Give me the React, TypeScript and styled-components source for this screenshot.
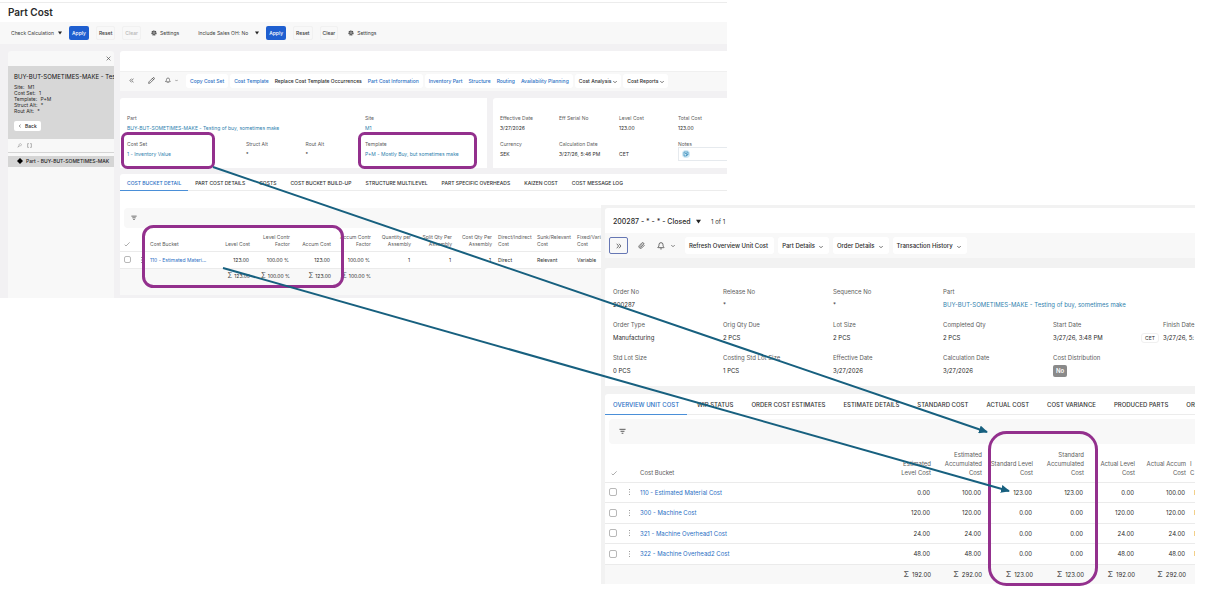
import React from "react";
import styled, { createGlobalStyle, css } from "styled-components";
import { Bell, Paperclip, Pencil } from "lucide-react";

const GlobalStyle = createGlobalStyle`
  * { box-sizing: border-box; }
  body { margin: 0; background: #fff; color: #2b2b2b; font-family: Inter, "Liberation Sans", sans-serif; font-size: 5px; }
  button, select, input { font: inherit; color: inherit; margin: 0; }
  a { text-decoration: none; }
`;

type Size = "small" | "large";

const link = "#2f7fae";
const blue = "#2a6fc4";

/* ---------- canvas ---------- */

const Canvas = styled.main`
  position: relative;
  display: grid;
  grid-template-columns: 601fr 126fr 468fr 13fr;
  overflow: hidden;
`;

const PartCostWindow = styled.section`
  grid-area: 1 / 1 / 2 / 3;
  min-width: 0;
  margin-top: 2px;
  height: 296px;
  overflow: hidden;
  display: flex;
  flex-direction: column;
  border-top: 1px solid #ececec;
`;

const OrderWindow = styled.section`
  grid-area: 1 / 2 / 2 / 4;
  min-width: 0;
  margin: 205px 0 8px;
  padding: 3px 0 0 4px;
  overflow: hidden;
  z-index: 1;
  display: flex;
  flex-direction: column;
  font-size: 6px;
  background: #f2f2f2;
`;

const Annotations = styled.svg`
  position: absolute;
  left: 0;
  top: 0;
  z-index: 2;
  pointer-events: none;
`;

/* ---------- shared parts ---------- */

const Title = styled.h1`
  margin: 0;
  padding-left: 8px;
  height: 19px;
  line-height: 19px;
  font-size: 10px;
  font-weight: 600;
  background: #fff;
`;

const Button = styled.button<{ $kind?: "primary" | "outline" }>`
  height: 14px;
  padding: 0 2px;
  display: flex;
  align-items: center;
  justify-content: center;
  gap: 3px;
  white-space: nowrap;
  border: 1px solid transparent;
  border-radius: 2px;
  background: transparent;
  &:disabled { color: #b5b5b5; }
  ${(p) => p.$kind === "primary" && css`background: #1f5fd0; color: #fff; font-weight: 500;`}
  ${(p) => p.$kind === "outline" && css`border-color: #f1f1f1; font-weight: 500;`}
`;

const SelectBox = styled.label`
  display: flex;
  align-items: center;
  gap: 2px;
`;

const Select = styled.select<{ $width: number; $size?: Size }>`
  appearance: none;
  border: 0;
  padding: 0;
  background: transparent;
  width: ${(p) => p.$width}px;
  font-size: ${(p) => (p.$size === "large" ? 7 : 5)}px;
  font-weight: ${(p) => (p.$size === "large" ? 500 : 400)};
`;

const Card = styled.div`
  background: #fff;
  border-radius: 3px 0 0 0;
  min-width: 0;
  overflow: hidden;
`;

const Group = styled.div`
  display: flex;
  align-items: center;
  gap: 6px;
  flex: none;
  height: 14px;
  padding: 0 4px;
  border-radius: 3px;
  background: #fff;
  font-weight: 500;
  white-space: nowrap;
`;

const MenuButton = styled.button<{ $size?: Size }>`
  display: flex;
  align-items: center;
  gap: ${(p) => (p.$size === "large" ? 4 : 2)}px;
  flex: none;
  height: ${(p) => (p.$size === "large" ? 17 : 14)}px;
  padding: 0 ${(p) => (p.$size === "large" ? 6 : 4)}px 0 4px;
  border: 0;
  border-radius: 3px;
  background: #fff;
  font-weight: 500;
  white-space: nowrap;
  svg { margin-top: 3px; }
`;

const TextButton = styled.button`
  border: 0;
  padding: 0;
  background: transparent;
  font-weight: 500;
`;

const IconButton = styled.button<{ $framed?: boolean; $width: number }>`
  flex: none;
  display: flex;
  align-items: center;
  justify-content: center;
  width: ${(p) => p.$width}px;
  height: 17px;
  padding: 0;
  border: ${(p) => (p.$framed ? "1px solid #6677b4" : "0")};
  border-radius: 2px;
  background: transparent;
  color: #444;
`;

const IconCluster = styled.div<{ $after: number }>`
  display: flex;
  align-items: center;
  gap: 4px;
  margin-right: ${(p) => p.$after}px;
`;

const ToolLink = styled.a`
  color: ${blue};
`;

const Tabs = styled.div<{ $size?: Size }>`
  display: flex;
  gap: ${(p) => (p.$size === "large" ? 2 : 0)}px;
  height: ${(p) => (p.$size === "large" ? 21 : 17)}px;
  border-bottom: 1px solid #ececec;
`;

const Tab = styled.button<{ $size?: Size; $active?: boolean }>`
  flex: none;
  height: ${(p) => (p.$size === "large" ? 21 : 17)}px;
  padding: ${(p) => (p.$size === "large" ? "0 8px" : "2px 7px 0")};
  border: 0;
  border-bottom: 1px solid ${(p) => (p.$active ? "#4a8fd8" : "transparent")};
  background: transparent;
  font-weight: 500;
  white-space: nowrap;
  color: ${(p) => (p.$active ? blue : "#333")};
`;

const FilterBar = styled.div<{ $size?: Size }>`
  display: flex;
  align-items: center;
  margin-left: 4px;
  padding-left: ${(p) => (p.$size === "large" ? 10 : 7)}px;
  height: ${(p) => (p.$size === "large" ? 25 : 20)}px;
  border-radius: 4px 0 0 4px;
  background: #f8f8f8;
  color: #444;
`;

const FieldBox = styled.div<{ $size?: Size; $span?: number }>`
  grid-column: span ${(p) => p.$span ?? 1};
  line-height: ${(p) => (p.$size === "large" ? 13 : 10)}px;
  white-space: nowrap;
  dt { color: #5c5c5c; }
  dd { margin: 0; display: flex; align-items: center; height: ${(p) => (p.$size === "large" ? 13 : 10)}px; }
  a { color: ${link}; }
`;

const Zone = styled.span`
  margin-left: auto;
  margin-right: 4px;
  padding: 0 3px;
  font-size: 5px;
  line-height: 8px;
  border: 1px solid #f0f0f0;
  border-radius: 3px;
`;

const Badge = styled.span`
  padding: 0 3px;
  font-weight: 600;
  line-height: 12px;
  color: #fff;
  background: #8a8a8a;
  border-radius: 2px;
`;

const Table = styled.table<{ $size?: Size }>`
  table-layout: fixed;
  width: 100%;
  border-collapse: collapse;
  th, td { padding: 0 2px 0 0; text-align: right; font-weight: 400; white-space: nowrap; overflow: hidden; }
  th { color: #5c5c5c; vertical-align: bottom; padding-right: 1px; line-height: ${(p) => (p.$size === "large" ? 9 : 7)}px; }
  thead tr { height: ${(p) => (p.$size === "large" ? 38 : 23)}px; }
  thead th { padding-bottom: ${(p) => (p.$size === "large" ? 5 : 3)}px; }
  tbody tr { height: ${(p) => (p.$size === "large" ? 20 : 17)}px; border-top: 1px solid #ebebeb; }
  tbody tr:nth-child(even) { height: ${(p) => (p.$size === "large" ? 21 : 17)}px; }
  tfoot tr { height: ${(p) => (p.$size === "large" ? 20 : 16)}px; border-top: 1px solid #ebebeb; background: #f8f8f8; }
  tfoot td { padding-right: 1px; }
  .text { text-align: left; padding-left: ${(p) => (p.$size === "large" ? 4 : 2)}px; }
  .last { padding-left: 5px; text-align: left; }
  .edge { padding: 0 0 0 3px; text-align: left; }
  thead .edge { padding-bottom: 5px; }
  .center { text-align: center; padding-left: 0; padding-right: 0; }
  .center svg { display: block; margin: 0 auto; }
  a { color: ${blue}; }
`;

const Sigma = styled.span<{ $size?: Size }>`
  margin-right: ${(p) => (p.$size === "large" ? 3 : 2)}px;
  font-size: ${(p) => (p.$size === "large" ? 8 : 7)}px;
  line-height: 8px;
  color: #555;
`;

const Check = styled.input<{ $size?: Size }>`
  appearance: none;
  display: block;
  margin: 0 0 0 4px;
  width: ${(p) => (p.$size === "large" ? 8 : 7)}px;
  height: ${(p) => (p.$size === "large" ? 8 : 7)}px;
  border: 1px solid #b8b8b8;
  border-radius: 2px;
  background: #fff;
`;

const Flag = styled.span`
  display: block;
  margin-left: auto;
  width: 1px;
  height: 5px;
  background: #f3d08a;
`;

/* ---------- icons ---------- */

const Icon = ({ d, size = 6, width = 1.6 }: { d: string; size?: number; width?: number }) => (
  <svg width={size} height={size} viewBox="0 0 16 16" fill="none" stroke="currentColor" strokeWidth={width} aria-hidden="true">
    <path d={d} />
  </svg>
);
const Caret = ({ size = 4 }: { size?: number }) => (
  <svg width={size} height={size} viewBox="0 0 8 8" aria-hidden="true"><path d="M0 1h8L4 7z" fill="#222" /></svg>
);
const Chevron = ({ size = 4 }: { size?: number }) => <Icon size={size} d="M1 4l7 7 7-7" width={2.6} />;
const Gear = () => (
  <svg width="6" height="6" viewBox="0 0 16 16" fill="none" stroke="#444" aria-hidden="true">
    <circle cx="8" cy="8" r="5.5" strokeWidth="3" strokeDasharray="3 1.3" />
    <circle cx="8" cy="8" r="4" strokeWidth="2" />
    <circle cx="8" cy="8" r="1.5" fill="#444" />
  </svg>
);
const Funnel = ({ size = 6 }: { size?: number }) => <Icon size={size} d="M1 3h14M3.500 7.500h9M6 12h4" width={2} />;
const Tick = () => (
  <svg width="6" height="8" viewBox="0 0 18 24" fill="none" stroke="#777" strokeWidth="1.800" aria-hidden="true">
    <path d="M2 14l4 4L17 7" />
  </svg>
);
const Dots = () => (
  <svg width="3" height="6" viewBox="0 0 3 6" fill="#999" aria-hidden="true">
    <path d="M1 0h1v1H1zM1 2.500h1v1H1zM1 5h1v1H1z" />
  </svg>
);

/* ---------- part cost window ---------- */

const TopBar = styled.div`
  display: flex;
  align-items: center;
  height: 22px;
  flex: none;
  padding-left: 11px;
  gap: 16px;
  background: #f8f8f8;
  color: #3a3a3a;
`;

const CommandSet = styled.div`
  display: flex;
  align-items: center;
  gap: 7px;
`;

const Split = styled.div`
  flex: 1;
  display: flex;
  gap: 6px;
  min-height: 0;
  padding: 7px 0 0 8px;
  background: #f2f1f3;
`;

const Sidebar = styled.aside`
  flex: none;
  width: 106px;
  display: flex;
  flex-direction: column;
  overflow: hidden;
  border-radius: 3px 3px 0 0;
  background: #f8f8f8;
`;

const SideClose = styled.div`
  height: 15px;
  display: flex;
  align-items: center;
  justify-content: flex-end;
  padding-right: 3px;
`;

const SideInfo = styled.div`
  height: 73px;
  padding: 7px 0 0 6px;
  background: #d7d7d7;
  white-space: nowrap;
  line-height: 6px;
  h2 { margin: 0 0 3px; font-size: 6px; line-height: 8px; font-weight: 400; color: #111; }
  p { margin: 0; }
  p span { margin-left: 2px; }
  button { margin-top: 7px; height: 10px; padding: 0 3px; background: #fff; font-weight: 500; }
`;

const SideIcons = styled.div`
  height: 14px;
  display: flex;
  align-items: center;
  gap: 5px;
  padding-left: 9px;
  color: #888;
  border-bottom: 1px solid #d5d5d5;
`;

const SideRow = styled.a`
  margin-top: 3px;
  height: 11px;
  display: flex;
  align-items: center;
  gap: 3px;
  padding: 0 0 1px 9px;
  font-weight: 500;
  white-space: nowrap;
  color: #222;
  background: #d5d5d5;
`;

const Main = styled.div`
  flex: 1;
  min-width: 0;
  display: flex;
  flex-direction: column;
`;

const HeaderSpace = styled.div`
  height: 20px;
`;

const ActionBar = styled.div`
  display: flex;
  align-items: center;
  gap: 2px;
  height: 20px;
  padding: 0 0 2px 6px;
  background: #f8f8f8;
  border-top: 1px solid #f0f0f0;
`;

const CardRow = styled.div`
  display: grid;
  grid-template-columns: 367fr 234fr;
  gap: 6px;
  margin: 7px 0 6px;
`;

const PartFields = styled.dl`
  display: grid;
  grid-template-columns: 2fr 1fr 1fr 2fr;
  row-gap: 6px;
  margin: 0;
  padding: 15px 3px 9px 7px;
`;

const CostFields = styled.dl`
  display: grid;
  grid-template-columns: 59px 60px 59px 60px;
  row-gap: 6px;
  margin: 0;
  padding: 15px 0 9px 7px;
`;

const NotesButton = styled.button`
  width: 60px;
  height: 14px;
  flex: none;
  display: flex;
  align-items: center;
  padding: 0 0 0 3px;
  border: 1px solid #e6eaee;
  background: #fff;
`;

const TabGap = styled.div`
  height: 17px;
`;

const TableRest = styled.div`
  height: 11px;
  background: #f8f8f8;
`;

const Field = ({ label, children, size, span }: { label: string; children?: React.ReactNode; size?: Size; span?: number }) => (
  <FieldBox $size={size} $span={span}>
    <dt>{label}</dt>
    <dd>{children}</dd>
  </FieldBox>
);

const partTabs = ["COST BUCKET DETAIL", "PART COST DETAILS", "COSTS", "COST BUCKET BUILD-UP", "STRUCTURE MULTILEVEL", "PART SPECIFIC OVERHEADS", "KAIZEN COST", "COST MESSAGE LOG"];
const partCols = [14, 14, 61, 42, 40, 41, 40, 40, 41, 40, 42, 40, 40];
const partSums = ["123.00", "100.00 %", "123.00", "100.00 %"];

const PartCost = () => (
  <PartCostWindow>
    <Title>Part Cost</Title>
    <TopBar>
      <CommandSet>
        <SelectBox>
          <Select $width={45} aria-label="Calculation"><option>Check Calculation</option></Select>
          <Caret />
        </SelectBox>
        <Button $kind="primary">Apply</Button>
        <Button $kind="outline">Reset</Button>
        <Button $kind="outline" disabled>Clear</Button>
        <Button><Gear />Settings</Button>
      </CommandSet>
      <CommandSet>
        <SelectBox>
          <Select $width={55} aria-label="Sales overhead"><option>Include Sales OH: No</option></Select>
          <Caret />
        </SelectBox>
        <Button $kind="primary">Apply</Button>
        <Button $kind="outline">Reset</Button>
        <Button $kind="outline">Clear</Button>
        <Button><Gear />Settings</Button>
      </CommandSet>
    </TopBar>
    <Split>
      <Sidebar>
        <SideClose><IconButton $width={6} aria-label="Close"><Icon size={5} d="M2 2l12 12M14 2L2 14" width={2} /></IconButton></SideClose>
        <SideInfo>
          <h2>BUY-BUT-SOMETIMES-MAKE - Test</h2>
          <p>Site: <span>M1</span></p>
          <p>Cost Set: <span>1</span></p>
          <p>Template: <span>P+M</span></p>
          <p>Struct Alt: <span>*</span></p>
          <p>Rout Alt: <span>*</span></p>
          <Button><Icon size={4} d="M10 2L5 8l5 6" width={2} />Back</Button>
        </SideInfo>
        <SideIcons>
          <Icon size={5} d="M2 14l3-3M6 5l5 5 4-5-4-3zM5 8l-1 4 4-1" />
          <Icon size={5} d="M6 2H2v12h4M10 2h4v12h-4" width={2} />
        </SideIcons>
        <SideRow href="#part">
          <svg width="6" height="6" viewBox="0 0 6 6" aria-hidden="true"><path d="M3 0l3 3-3 3-3-3z" /></svg>
          Part - BUY-BUT-SOMETIMES-MAK
        </SideRow>
      </Sidebar>
      <Main>
        <Card>
          <HeaderSpace />
          <ActionBar>
            <IconCluster $after={6}>
              <IconButton $width={11} aria-label="Collapse"><Icon size={5} d="M8 2L3 8l5 6M14 2L9 8l5 6" width={2} /></IconButton>
              <IconButton $width={20} aria-label="Edit"><Pencil size={7} strokeWidth={2.4} /></IconButton>
              <IconButton $width={6} aria-label="Notifications"><Bell size={7} strokeWidth={2.4} /></IconButton>
              <IconButton $width={3} aria-label="More"><Chevron size={3} /></IconButton>
            </IconCluster>
            <Group><ToolLink href="#copy">Copy Cost Set</ToolLink></Group>
            <Group>
              <ToolLink href="#template">Cost Template</ToolLink>
              <TextButton>Replace Cost Template Occurrences</TextButton>
              <ToolLink href="#info">Part Cost Information</ToolLink>
            </Group>
            <Group>
              <ToolLink href="#inventory">Inventory Part</ToolLink>
              <ToolLink href="#structure">Structure</ToolLink>
              <ToolLink href="#routing">Routing</ToolLink>
              <ToolLink href="#planning">Availability Planning</ToolLink>
            </Group>
            <MenuButton>Cost Analysis<Chevron /></MenuButton>
            <MenuButton>Cost Reports<Chevron /></MenuButton>
          </ActionBar>
        </Card>
        <CardRow>
          <Card>
            <PartFields>
              <Field label="Part" span={3}><a href="#part">BUY-BUT-SOMETIMES-MAKE - Testing of buy, sometimes make</a></Field>
              <Field label="Site"><a href="#site">M1</a></Field>
              <Field label="Cost Set"><a href="#set">1 - Inventory Value</a></Field>
              <Field label="Struct Alt">*</Field>
              <Field label="Rout Alt">*</Field>
              <Field label="Template"><a href="#tpl">P+M - Mostly Buy, but sometimes make</a></Field>
            </PartFields>
          </Card>
          <Card>
            <CostFields>
              <Field label="Effective Date">3/27/2026</Field>
              <Field label="Eff Serial No" />
              <Field label="Level Cost">123.00</Field>
              <Field label="Total Cost">123.00</Field>
              <Field label="Currency">SEK</Field>
              <Field label="Calculation Date">3/27/26, 5:46 PM</Field>
              <Field label={"\u00a0"}>CET</Field>
              <Field label="Notes">
                <NotesButton aria-label="Notes">
                  <svg width="8" height="8" viewBox="0 0 16 16" fill="none" stroke="#2f86b8" strokeWidth="1.400" aria-hidden="true">
                    <circle cx="8" cy="8" r="8" fill="#cfe8f5" stroke="none" />
                    <path d="M4 4h8v5l-3 3H4zM6 7h4M9 12V9h3" />
                  </svg>
                </NotesButton>
              </Field>
            </CostFields>
          </Card>
        </CardRow>
        <Card>
          <Tabs role="tablist">
            {partTabs.map((t, i) => <Tab key={t} role="tab" aria-selected={i === 0} $active={i === 0}>{t}</Tab>)}
          </Tabs>
          <TabGap />
          <FilterBar><Funnel /></FilterBar>
          <Table>
            <colgroup>{partCols.map((w, i) => <col key={i} width={w} />)}<col /></colgroup>
            <thead>
              <tr>
                <th className="center"><Tick /></th><th />
                <th className="text">Cost Bucket</th>
                <th>Level Cost</th>
                <th>Level Contr<br />Factor</th>
                <th>Accum Cost</th>
                <th>Accum Contr<br />Factor</th>
                <th>Quantity per<br />Assembly</th>
                <th>Split Qty Per<br />Assembly</th>
                <th>Cost Qty Per<br />Assembly</th>
                <th className="last">Direct/Indirect<br />Cost</th>
                <th className="text">Sunk/Relevant<br />Cost</th>
                <th className="text">Fixed/Variable<br />Cost</th>
                <th />
              </tr>
            </thead>
            <tbody>
              <tr>
                <td><Check type="checkbox" aria-label="Select 110" /></td>
                <td className="center"><Dots /></td>
                <td className="text"><a href="#110">110 - Estimated Materi...</a></td>
                <td>123.00</td><td>100.00 %</td><td>123.00</td><td>100.00 %</td>
                <td>1</td><td>1</td><td>1</td>
                <td className="last">Direct</td><td className="text">Relevant</td><td className="text">Variable</td><td />
              </tr>
            </tbody>
            <tfoot>
              <tr>
                <td /><td /><td />
                {partSums.map((v, i) => <td key={i}><Sigma>Σ</Sigma>{v}</td>)}
                <td /><td /><td /><td /><td /><td /><td />
              </tr>
            </tfoot>
          </Table>
          <TableRest />
        </Card>
      </Main>
    </Split>
  </PartCostWindow>
);

/* ---------- order window ---------- */

const OrderTitle = styled.div`
  display: flex;
  align-items: center;
  gap: 10px;
  height: 25px;
  padding: 2px 0 0 8px;
`;

const OrderBar = styled.div`
  display: flex;
  align-items: center;
  gap: 4px;
  height: 25px;
  padding-left: 4px;
  background: #f8f8f8;
`;

const OrderFields = styled.dl`
  display: grid;
  grid-template-columns: repeat(6, 110px);
  row-gap: 7px;
  margin: 0;
  padding: 17px 0 9px 8px;
`;

const OrderCard = styled(Card)<{ $gap: number }>`
  flex: none;
  margin-top: ${(p) => p.$gap}px;
`;

const OrderFilter = styled.div`
  padding-top: 4px;
`;

const orderTabs = ["OVERVIEW UNIT COST", "WIP STATUS", "ORDER COST ESTIMATES", "ESTIMATE DETAILS", "STANDARD COST", "ACTUAL COST", "COST VARIANCE", "PRODUCED PARTS", "ORD"];

const orderRows: [string, string[]][] = [
  ["110 - Estimated Material Cost", ["0.00", "100.00", "123.00", "123.00", "0.00", "100.00"]],
  ["300 - Machine Cost", ["120.00", "120.00", "0.00", "0.00", "120.00", "120.00"]],
  ["321 - Machine Overhead1 Cost", ["24.00", "24.00", "0.00", "0.00", "24.00", "24.00"]],
  ["322 - Machine Overhead2 Cost", ["48.00", "48.00", "0.00", "0.00", "48.00", "48.00"]],
];
const orderSums = ["192.00", "292.00", "123.00", "123.00", "192.00", "292.00"];

const ShopOrder = () => (
  <OrderWindow>
    <OrderCard $gap={0}>
      <OrderTitle>
        <SelectBox>
          <Select $width={81} $size="large" aria-label="Order"><option>200287 - * - * - Closed</option></Select>
          <Caret size={5} />
        </SelectBox>
        <span>1 of 1</span>
      </OrderTitle>
      <OrderBar>
        <IconCluster $after={6}>
          <IconButton $framed $width={19} aria-label="Expand"><Icon size={6} d="M2 2l5 6-5 6M8 2l5 6-5 6" width={2} /></IconButton>
          <IconButton $width={19} aria-label="Attachments"><Paperclip size={7} strokeWidth={2.4} /></IconButton>
          <IconButton $width={12} aria-label="Notifications"><Bell size={8} strokeWidth={2.4} /></IconButton>
          <IconButton $width={4} aria-label="More"><Chevron /></IconButton>
        </IconCluster>
        <MenuButton $size="large">Refresh Overview Unit Cost</MenuButton>
        <MenuButton $size="large">Part Details<Chevron /></MenuButton>
        <MenuButton $size="large">Order Details<Chevron /></MenuButton>
        <MenuButton $size="large">Transaction History<Chevron /></MenuButton>
      </OrderBar>
    </OrderCard>
    <OrderCard $gap={10}>
      <OrderFields>
        <Field size="large" label="Order No">200287</Field>
        <Field size="large" label="Release No">*</Field>
        <Field size="large" label="Sequence No">*</Field>
        <Field size="large" label="Part" span={3}><a href="#part">BUY-BUT-SOMETIMES-MAKE - Testing of buy, sometimes make</a></Field>
        <Field size="large" label="Order Type">Manufacturing</Field>
        <Field size="large" label="Orig Qty Due">2 PCS</Field>
        <Field size="large" label="Lot Size">2 PCS</Field>
        <Field size="large" label="Completed Qty">2 PCS</Field>
        <Field size="large" label="Start Date">3/27/26, 3:48 PM<Zone>CET</Zone></Field>
        <Field size="large" label="Finish Date">3/27/26, 5:</Field>
        <Field size="large" label="Std Lot Size">0 PCS</Field>
        <Field size="large" label="Costing Std Lot Size">1 PCS</Field>
        <Field size="large" label="Effective Date">3/27/2026</Field>
        <Field size="large" label="Calculation Date">3/27/2026</Field>
        <Field size="large" label="Cost Distribution"><Badge>No</Badge></Field>
      </OrderFields>
    </OrderCard>
    <OrderCard $gap={8}>
      <Tabs $size="large" role="tablist">
        {orderTabs.map((t, i) => <Tab key={t} $size="large" role="tab" aria-selected={i === 0} $active={i === 0}>{t}</Tab>)}
      </Tabs>
      <OrderFilter><FilterBar $size="large"><Funnel size={7} /></FilterBar></OrderFilter>
      <Table $size="large">
        <colgroup>
          <col width={17} /><col width={14} /><col />
          {orderSums.map((_, i) => <col key={i} width={51} />)}
          <col width={8} />
        </colgroup>
        <thead>
          <tr>
            <th className="center"><Tick /></th><th />
            <th className="text">Cost Bucket</th>
            <th>Estimated<br />Level Cost</th>
            <th>Estimated<br />Accumulated<br />Cost</th>
            <th>Standard Level<br />Cost</th>
            <th>Standard<br />Accumulated<br />Cost</th>
            <th>Actual Level<br />Cost</th>
            <th>Actual Accum<br />Cost</th>
            <th className="edge">I<br />C</th>
          </tr>
        </thead>
        <tbody>
          {orderRows.map(([name, values]) => (
            <tr key={name}>
              <td><Check $size="large" type="checkbox" aria-label={`Select ${name}`} /></td>
              <td className="center"><Dots /></td>
              <td className="text"><a href="#bucket">{name}</a></td>
              {values.map((v, i) => <td key={i}>{v}</td>)}
              <td className="edge"><Flag /></td>
            </tr>
          ))}
        </tbody>
        <tfoot>
          <tr>
            <td /><td /><td />
            {orderSums.map((v, i) => <td key={i}><Sigma $size="large">Σ</Sigma>{v}</td>)}
            <td />
          </tr>
        </tfoot>
      </Table>
    </OrderCard>
  </OrderWindow>
);

/* ---------- page ---------- */

export default function App() {
  return (
    <>
      <GlobalStyle />
      <Canvas>
        <PartCost />
        <ShopOrder />
        <Annotations width="1208" height="592" fill="none" aria-hidden="true">
          <defs>
            <marker id="tip" markerUnits="userSpaceOnUse" markerWidth="9" markerHeight="8" refX="8" refY="4" orient="auto">
              <path d="M0 0l9 4-9 4z" fill="#17607f" />
            </marker>
          </defs>
          <g stroke="#93308d" strokeWidth="3">
            <rect x="122.500" y="133.500" width="91" height="34" rx="5" />
            <rect x="359.500" y="133.500" width="116" height="34" rx="5" />
            <rect x="143.500" y="226.500" width="199" height="60" rx="10" />
            <rect x="989.500" y="432.500" width="107" height="152" rx="17" />
          </g>
          <g stroke="#17607f" strokeWidth="2">
            <path d="M213 167L987 432" markerEnd="url(#tip)" />
            <path d="M223 268L1009 491" markerEnd="url(#tip)" />
          </g>
        </Annotations>
      </Canvas>
    </>
  );
}
